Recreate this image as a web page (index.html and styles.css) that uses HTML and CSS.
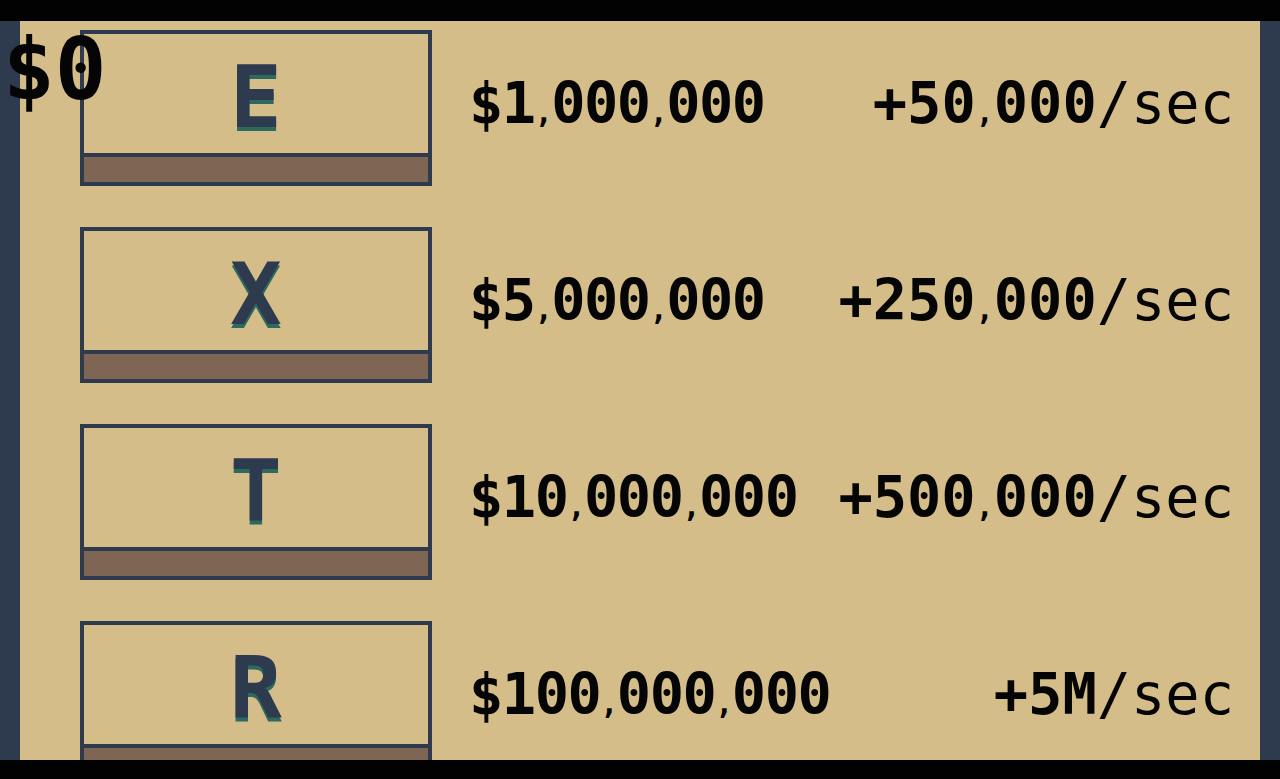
FILE: index.html
```html
<!DOCTYPE html>
<html lang="en">
<head>
<meta charset="utf-8">
<title>Upgrades</title>
<link rel="stylesheet" href="styles.css">
</head>
<body>
<div class="screen">
  <div class="topbar"></div>
  <div class="frame">
    <div class="side"></div>
    <main class="panel">
      <div class="row">
        <div class="btn"><div class="face"><span class="key">E</span></div><div class="bar"></div></div>
        <div class="price">$1<span class="c">,</span>000<span class="c">,</span>000</div>
        <div class="rate">+50<span class="c">,</span>000<span class="per">/sec</span></div>
      </div>
      <div class="row">
        <div class="btn"><div class="face"><span class="key">X</span></div><div class="bar"></div></div>
        <div class="price">$5<span class="c">,</span>000<span class="c">,</span>000</div>
        <div class="rate">+250<span class="c">,</span>000<span class="per">/sec</span></div>
      </div>
      <div class="row">
        <div class="btn"><div class="face"><span class="key">T</span></div><div class="bar"></div></div>
        <div class="price">$10<span class="c">,</span>000<span class="c">,</span>000</div>
        <div class="rate">+500<span class="c">,</span>000<span class="per">/sec</span></div>
      </div>
      <div class="row">
        <div class="btn"><div class="face"><span class="key">R</span></div><div class="bar"></div></div>
        <div class="price">$100<span class="c">,</span>000<span class="c">,</span>000</div>
        <div class="rate">+5M<span class="per">/sec</span></div>
      </div>
    </main>
    <div class="side"></div>
  </div>
  <div class="bottombar"></div>
  <div class="money">$0</div>
</div>
</body>
</html>
```
FILE: styles.css
```css
html, body {
  margin: 0;
  padding: 0;
  background: #000;
}

.screen {
  position: relative;
  width: 1280px;
  height: 779px;
  overflow: hidden;
  background: #000;
  font-family: "DejaVu Sans Mono", "Liberation Mono", monospace;
  color: #050505;
}

.topbar {
  height: 21px;
  background: #020202;
}

.bottombar {
  height: 19px;
  background: #020202;
}

.frame {
  display: flex;
  height: 739px;
}

.side {
  width: 20px;
  flex: none;
  background: #2e3a4d;
}

.panel {
  flex: 1;
  background: #d4bd88;
  overflow: hidden;
  display: flex;
  flex-direction: column;
  gap: 41px;
  padding: 9px 26px 0 60px;
}

.row {
  display: grid;
  grid-template-columns: 352px 1fr auto;
  column-gap: 37px;
  align-items: start;
  flex: none;
}

.btn {
  box-sizing: border-box;
  width: 352px;
  height: 156px;
  border: 4px solid #2e3a4d;
  display: flex;
  flex-direction: column;
}

.face {
  flex: 1;
  display: flex;
  align-items: center;
  justify-content: center;
  padding-top: 6px;
}

.bar {
  height: 25px;
  border-top: 4px solid #2e3a4d;
  background: #7f6654;
}

.key {
  font-family: "DejaVu Sans Mono", monospace;
  font-weight: bold;
  font-size: 86px;
  line-height: 1;
  color: #2e3a4d;
  text-shadow: 0 4px #2c6a5f;
}

.price,
.rate {
  font-size: 57px;
  line-height: 1;
  font-weight: bold;
  letter-spacing: -1.5px;
  margin-top: 45px;
  white-space: nowrap;
}

.rate {
  text-align: right;
  letter-spacing: 0;
}

.c {
  font-size: 30px;
}

.per {
  font-weight: normal;
}

.money {
  position: absolute;
  left: 3px;
  top: 26px;
  font-size: 86px;
  line-height: 1;
  font-weight: bold;
  color: #050505;
}
```
